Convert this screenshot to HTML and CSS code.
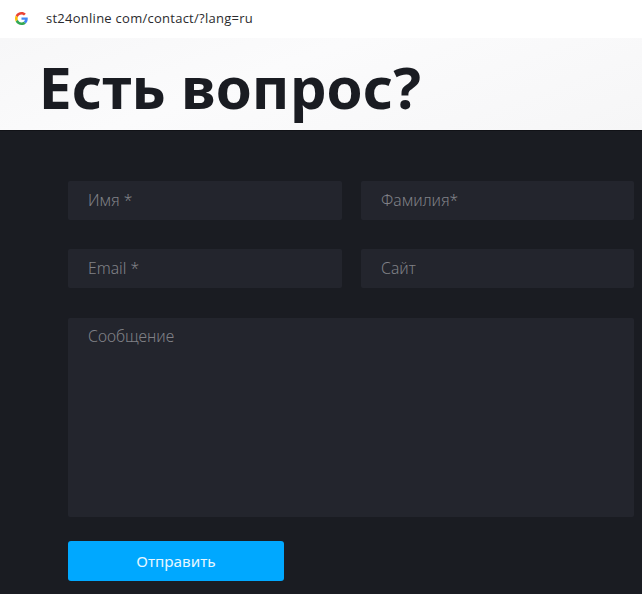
FILE: index.html
```html
<!DOCTYPE html>
<html lang="ru">
<head>
  <meta charset="UTF-8">
  <meta name="viewport" content="width=device-width, initial-scale=1.0">
  <title>Есть вопрос?</title>
  <link rel="stylesheet" href="styles.css">
</head>
<body>
  <div class="urlbar">
    <svg class="g-logo" width="13" height="13" viewBox="0 0 48 48">
      <path fill="#EA4335" d="M24 9.500c3.500 0 6.700 1.300 9.100 3.500l6.800-6.800C35.800 2.400 30.300 0 24 0 14.600 0 6.500 5.400 2.600 13.200l7.900 6.100C12.400 13.700 17.700 9.500 24 9.500z"/>
      <path fill="#4285F4" d="M47 24.500c0-1.600-.1-3.100-.4-4.500H24v9h12.900c-.6 3-2.200 5.500-4.700 7.200l7.700 6C44.400 37.900 47 31.800 47 24.500z"/>
      <path fill="#FBBC05" d="M10.500 28.700c-.5-1.400-.8-3-.8-4.700s.3-3.200.8-4.700l-7.900-6.100C.9 16.500 0 20.100 0 24s.9 7.500 2.600 10.800l7.900-6.100z"/>
      <path fill="#34A853" d="M24 48c6.500 0 11.900-2.100 15.900-5.800l-7.700-6c-2.100 1.400-4.900 2.300-8.200 2.300-6.300 0-11.600-4.200-13.500-9.800l-7.900 6.100C6.500 42.600 14.600 48 24 48z"/>
    </svg>
    <span class="url">st24online com/contact/?lang=ru</span>
  </div>

  <div class="hero">
    <h1>Есть вопрос?</h1>
  </div>

  <div class="main">
    <form class="contact">
      <input class="field" type="text" placeholder="Имя *">
      <input class="field" type="text" placeholder="Фамилия*">
      <input class="field" type="text" placeholder="Email *">
      <input class="field" type="text" placeholder="Сайт">
      <textarea class="field message" placeholder="Сообщение"></textarea>
      <button class="send" type="button">Отправить</button>
    </form>
  </div>
</body>
</html>
```

FILE: styles.css
```css
html,body{margin: 0;padding: 0;}
body{
  height: 594px;
  overflow: hidden;
  background: #1a1c22;
  font-family: "Noto Sans", "Open Sans", sans-serif;
}

.urlbar{
  display: flex;
  align-items: center;
  height: 38px;
  padding-left: 15px;
  padding-bottom: 2px;
  box-sizing: border-box;
  background: #fff;
}
.g-logo{margin-right: 18px;}
.url{
  font-family: "Open Sans", sans-serif;
  font-size: 13px;
  letter-spacing: 0.26px;
  color: #2b2b2e;
}

.hero{
  height: 93px;
  padding-left: 39px;
  box-sizing: border-box;
  background: linear-gradient(160deg, #f7f7f8 0%, #fbfbfc 40%, #f6f6f7 100%);
  border-bottom: 1px solid #111217;
}
.hero h1{
  margin: 0;
  font-size: 58px;
  line-height: 98px;
  height: 92px;
  overflow: hidden;
  font-weight: 700;
  color: #1a1c22;
  white-space: nowrap;
  letter-spacing: 0.1px;
}

.main{padding: 50px 8px 0 68px;}
.contact{
  display: grid;
  grid-template-columns: 274px 273px;
  column-gap: 19px;
  row-gap: 29px;
}
.field{
  display: block;
  width: 100%;
  height: 39px;
  box-sizing: border-box;
  margin: 0;
  padding: 0 20px 2px;
  border: 0;
  border-radius: 2px;
  outline: none;
  background: #23252d;
  font-family: "Noto Sans", sans-serif;
  font-size: 15.7px;
  font-weight: 300;
  color: #85868b;
}
.field::placeholder{color: #808187;opacity: 1;}
.message{
  grid-column: 1 / 3;
  height: 199px;
  margin-top: 1px;
  padding-top: 7px;
  resize: none;
}
.send{
  width: 216px;
  height: 40px;
  margin-top: -5px;
  border: 0;
  border-radius: 3px;
  background: #00a8ff;
  color: #e6f7ff;
  font-family: "Noto Sans", sans-serif;
  font-size: 15.3px;
}
```
